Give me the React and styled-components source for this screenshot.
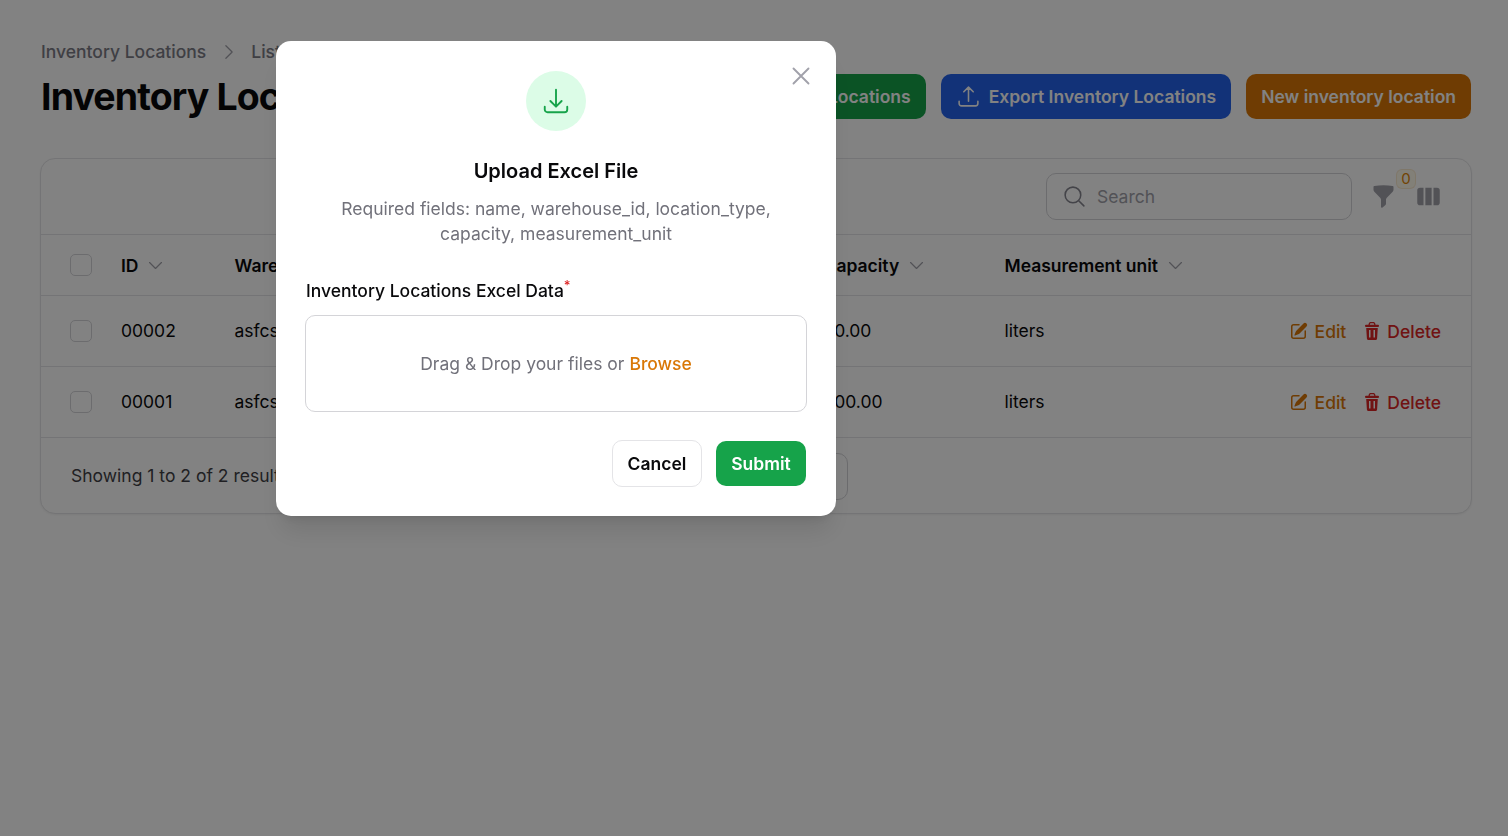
import React from "react";
import styled, { createGlobalStyle } from "styled-components";
import {
  HiMiniFunnel,
  HiMiniViewColumns,
  HiMiniPencilSquare,
  HiOutlineArrowUpTray,
  HiOutlineArrowDownTray,
  HiOutlineMagnifyingGlass,
  HiOutlineChevronDown,
  HiOutlineChevronRight,
  HiOutlineXMark,
} from "react-icons/hi2";

const Global = createGlobalStyle`
  html, body { margin: 0; padding: 0; background: #fff; }
  body { font-family: Inter, "Liberation Sans", sans-serif; color: #09090b; font-size: 17.5px; line-height: 25px; }
  * { box-sizing: border-box; }
`;

const Page = styled.div`
  height: 836px;
  padding: 40px 36px 0 40px;
  overflow: hidden;
`;
const Header = styled.header`
  display: flex;
  justify-content: space-between;
  align-items: flex-end;
  height: 79px;
  padding: 0 1px;
`;
const Crumbs = styled.nav`
  display: flex;
  align-items: center;
  gap: 12.5px;
  margin-top: -2px;
  color: #7c7c86;
  font-weight: 500;
  height: 25px;
  svg { width: 20px; height: 20px; color: #a1a1aa; }
`;
const Title = styled.h1`
  margin: 10px 0 0;
  font-size: 37.5px;
  line-height: 45px;
  font-weight: 700;
  letter-spacing: -0.9px;
  white-space: nowrap;
`;
const Actions = styled.div`
  display: flex;
  gap: 15px;
  align-items: center;
`;
const ActionButton = styled.button`
  height: 45px;
  border: 0;
  border-radius: 10px;
  padding: 0 15px;
  display: flex;
  align-items: center;
  gap: 8px;
  background: ${(p) => p.$bg};
  color: #fff;
  font: 600 17.5px/25px Inter, sans-serif;
  white-space: nowrap;
  svg { width: 25px; height: 25px; }
`;
const Card = styled.section`
  margin-top: 39px;
  height: 356px;
  border: 1px solid #e4e4e7;
  border-radius: 15px;
  background: #fff;
  box-shadow: 0 1px 2px rgba(0,0,0,.05);
  overflow: hidden;
`;
const Toolbar = styled.div`
  height: 76px;
  display: flex;
  align-items: center;
  justify-content: flex-end;
  padding: 0 30px;
  gap: 19px;
  border-bottom: 1px solid #e4e4e7;
`;
const SearchBox = styled.div`
  width: 306px;
  height: 47px;
  border: 1px solid #d4d4d8;
  border-radius: 10px;
  display: flex;
  align-items: center;
  gap: 10px;
  padding: 0 15px;
  color: #a1a1aa;
  svg { width: 25px; height: 25px; color: #85858f; flex: none; }
`;
const ToolIcons = styled.div`
  display: flex;
  gap: 20px;
  align-items: center;
  svg { width: 25px; height: 25px; color: #a1a1aa; display: block; }
`;
const FilterWrap = styled.div`
  position: relative;
`;
const Badge = styled.span`
  position: absolute;
  left: 25px;
  top: -15px;
  width: 20px;
  height: 20px;
  border-radius: 6px;
  background: #fffbeb;
  border: 1px solid rgba(217, 119, 6, 0.12);
  color: #e08508;
  font-size: 15px;
  line-height: 18px;
  text-align: center;
`;
const Row = styled.div`
  display: grid;
  grid-template-columns: 51px 113.5px 589px 181px 1fr;
  align-items: center;
  height: ${(p) => p.$h}px;
  border-bottom: 1px solid #e4e4e7;
  padding: 0 30px 0 29px;
  font-weight: ${(p) => (p.$head ? 600 : 400)};
  background: #fff;
`;
const Check = styled.span`
  width: 22px;
  height: 22px;
  border: 1px solid #d4d4d8;
  border-radius: 5px;
  display: block;
  background: #fff;
`;
const HeadCell = styled.span`
  display: flex;
  align-items: center;
  gap: 8px;
  white-space: nowrap;
  svg { width: 19px; height: 19px; color: #a1a1aa; }
`;
const Cell = styled.span`
  white-space: nowrap;
  padding-bottom: 2px;
`;
const LastCell = styled.div`
  display: flex;
  justify-content: space-between;
  align-items: center;
`;
const RowActions = styled.div`
  display: flex;
  align-items: center;
  font-weight: 500;
`;
const EditAction = styled.span`
  display: flex;
  align-items: center;
  gap: 6px;
  color: #d97706;
  svg { width: 20px; height: 20px; margin-top: -1px; }
`;
const DeleteAction = styled.span`
  display: flex;
  align-items: center;
  gap: 8px;
  margin-left: 19px;
  color: #dc2626;
  svg { width: 14px; height: 18px; margin-top: -1px; }
`;
const Footer = styled.div`
  display: grid;
  grid-template-columns: 1fr auto 1fr;
  align-items: center;
  height: 76px;
  padding: 0 30px;
  color: #3f3f46;
`;
const PerPage = styled.div`
  width: 184px;
  height: 47px;
  border: 1px solid #d4d4d8;
  border-radius: 10px;
`;
const Overlay = styled.div`
  position: fixed;
  inset: 0;
  background: rgba(0, 0, 0, 0.49);
`;
const Modal = styled.div`
  position: absolute;
  left: 276px;
  top: 41px;
  width: 560px;
  height: 475px;
  background: #fff;
  border-radius: 15px;
  box-shadow: 0 20px 25px -5px rgba(0,0,0,.1), 0 8px 10px -6px rgba(0,0,0,.1);
  padding: 30px;
  display: flex;
  flex-direction: column;
  > * { flex: none; }
`;
const Close = styled.button`
  position: absolute;
  right: 20px;
  top: 20px;
  width: 30px;
  height: 30px;
  padding: 0;
  border: 0;
  background: none;
  color: #a1a1aa;
  svg { width: 30px; height: 30px; display: block; }
`;
const IconCircle = styled.div`
  width: 60px;
  height: 60px;
  border-radius: 50%;
  background: #dcfce7;
  color: #16a34a;
  display: flex;
  align-items: center;
  justify-content: center;
  align-self: center;
  svg { width: 30px; height: 30px; }
`;
const ModalTitle = styled.h2`
  margin: 25px 0 0;
  font-size: 20px;
  line-height: 30px;
  font-weight: 600;
  text-align: center;
`;
const ModalDesc = styled.p`
  margin: 10px 0 0;
  color: #71717a;
  text-align: center;
`;
const Label = styled.div`
  margin-top: 32px;
  font-weight: 500;
  height: 25px;
  sup { color: #dc2626; font-size: 13px; line-height: 0; }
`;
const Drop = styled.div`
  margin: 12px -1px 0;
  height: 97px;
  border: 1px solid #d4d4d8;
  border-radius: 10px;
  display: flex;
  align-items: center;
  justify-content: center;
  color: #71717a;
  b { color: #d97706; font-weight: 500; margin-left: 5px; }
`;
const ModalActions = styled.div`
  margin-top: 29px;
  display: flex;
  justify-content: flex-end;
  align-items: flex-start;
  gap: 14px;
`;
const Cancel = styled.button`
  width: 90px;
  height: 47px;
  margin-top: -1px;
  border: 1px solid #e4e4e7;
  border-radius: 10px;
  background: #fff;
  color: #09090b;
  font: 600 17.5px/25px Inter, sans-serif;
`;
const Submit = styled.button`
  width: 90px;
  height: 45px;
  border: 0;
  border-radius: 10px;
  background: #16a34a;
  color: #fff;
  font: 600 17.5px/25px Inter, sans-serif;
`;

const TrashIcon = () => (
  <svg viewBox="0 0 14 18" fill="currentColor">
    <path d="M4.2 3V2.2A1.7 1.7 0 0 1 5.9.6h2.2a1.7 1.7 0 0 1 1.7 1.6V3" fill="none" stroke="currentColor" strokeWidth="1.3" />
    <rect x="0" y="2.8" width="14" height="2.2" rx="1" />
    <path
      fillRule="evenodd"
      d="M1.2 6h11.6l-.7 10.4A1.7 1.7 0 0 1 10.4 18H3.6a1.7 1.7 0 0 1-1.7-1.6L1.2 6ZM4 8v7.5h1.5V8H4Zm4.5 0v7.5H10V8H8.5Z"
    />
  </svg>
);

const rows = [
  { id: "00002", wh: "asfcs", cap: "50.00", unit: "liters" },
  { id: "00001", wh: "asfcs", cap: "200.00", unit: "liters" },
];

export default function App() {
  return (
    <>
      <Global />
      <Page>
        <Header>
          <div>
            <Crumbs>
              <span>Inventory Locations</span>
              <HiOutlineChevronRight />
              <span>List</span>
            </Crumbs>
            <Title>Inventory Locations</Title>
          </div>
          <Actions>
            <ActionButton $bg="#16a34a">Import Inventory Locations</ActionButton>
            <ActionButton $bg="#2563eb"><HiOutlineArrowUpTray />Export Inventory Locations</ActionButton>
            <ActionButton $bg="#d97706">New inventory location</ActionButton>
          </Actions>
        </Header>
        <Card>
          <Toolbar>
            <SearchBox><HiOutlineMagnifyingGlass /><span>Search</span></SearchBox>
            <ToolIcons>
              <FilterWrap><HiMiniFunnel /><Badge>0</Badge></FilterWrap>
              <HiMiniViewColumns />
            </ToolIcons>
          </Toolbar>
          <Row $head $h={61}>
            <Check />
            <HeadCell>ID <HiOutlineChevronDown /></HeadCell>
            <HeadCell>Warehouse <HiOutlineChevronDown /></HeadCell>
            <HeadCell>Capacity <HiOutlineChevronDown /></HeadCell>
            <HeadCell>Measurement unit <HiOutlineChevronDown /></HeadCell>
          </Row>
          {rows.map((r) => (
            <Row key={r.id} $h={71}>
              <Check />
              <Cell>{r.id}</Cell>
              <Cell>{r.wh}</Cell>
              <Cell>{r.cap}</Cell>
              <LastCell>
                <Cell>{r.unit}</Cell>
                <RowActions>
                  <EditAction><HiMiniPencilSquare />Edit</EditAction>
                  <DeleteAction><TrashIcon />Delete</DeleteAction>
                </RowActions>
              </LastCell>
            </Row>
          ))}
          <Footer>
            <Cell>Showing 1 to 2 of 2 results</Cell>
            <PerPage />
            <span />
          </Footer>
        </Card>
      </Page>
      <Overlay>
        <Modal>
          <Close><HiOutlineXMark /></Close>
          <IconCircle><HiOutlineArrowDownTray /></IconCircle>
          <ModalTitle>Upload Excel File</ModalTitle>
          <ModalDesc>Required fields: name, warehouse_id, location_type, capacity, measurement_unit</ModalDesc>
          <Label>Inventory Locations Excel Data<sup>*</sup></Label>
          <Drop>Drag &amp; Drop your files or <b>Browse</b></Drop>
          <ModalActions>
            <Cancel>Cancel</Cancel>
            <Submit>Submit</Submit>
          </ModalActions>
        </Modal>
      </Overlay>
    </>
  );
}
